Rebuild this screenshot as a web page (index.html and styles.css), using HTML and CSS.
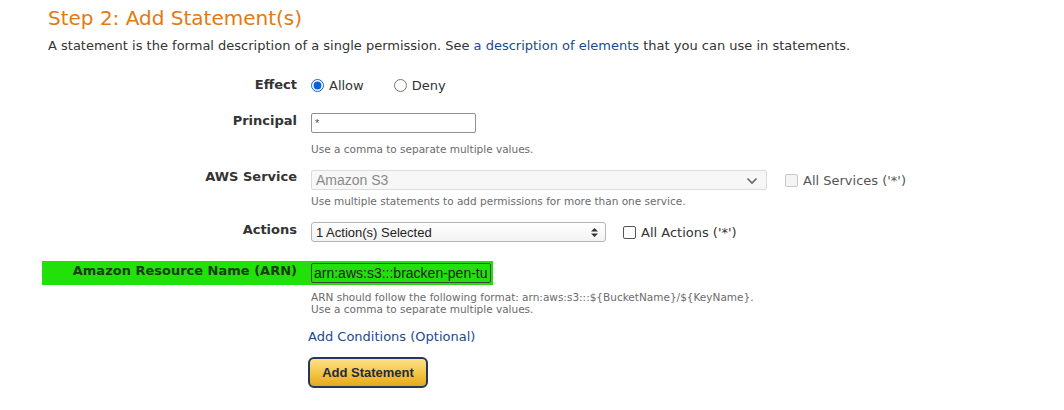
FILE: index.html
```html
<!DOCTYPE html>
<html lang="en">
<head>
<meta charset="utf-8">
<title>Step 2: Add Statement(s)</title>
<link rel="stylesheet" href="styles.css">
</head>
<body>
<div class="page">
  <h1 class="title">Step 2: Add Statement(s)</h1>
  <p class="intro">A statement is the formal description of a single permission. See <a class="link" href="#">a description of elements</a> that you can use in statements.</p>

  <div class="row row-effect">
    <div class="label">Effect</div>
    <div class="control radios">
      <label class="radio-opt"><input type="radio" name="effect" checked class="radio"><span>Allow</span></label>
      <label class="radio-opt deny"><input type="radio" name="effect" class="radio"><span>Deny</span></label>
    </div>
  </div>

  <div class="row row-principal">
    <div class="label">Principal</div>
    <div class="control">
      <input class="text-input principal" type="text" value="*">
      <div class="hint hint-1">Use a comma to separate multiple values.</div>
    </div>
  </div>

  <div class="row row-service">
    <div class="label">AWS Service</div>
    <div class="control">
      <div class="inline">
        <div class="select select-service">
          <span class="select-text">Amazon S3</span>
          <svg class="chev" width="12" height="8" viewBox="0 0 12 8"><path d="M1.5 1.5 L6 6 L10.5 1.5" fill="none" stroke="#666" stroke-width="1.6"/></svg>
        </div>
        <label class="check-opt disabled"><span class="box box-disabled"></span><span>All Services ('*')</span></label>
      </div>
      <div class="hint hint-2">Use multiple statements to add permissions for more than one service.</div>
    </div>
  </div>

  <div class="row row-actions">
    <div class="label">Actions</div>
    <div class="control">
      <div class="inline">
        <div class="select select-actions">
          <span class="select-text">1 Action(s) Selected</span>
          <svg class="updown" width="7" height="9" viewBox="0 0 7 9"><path d="M3.5 0 L7 3.5 L0 3.5 Z M3.5 9 L7 5.5 L0 5.5 Z" fill="#333"/></svg>
        </div>
        <label class="check-opt"><span class="box"></span><span>All Actions ('*')</span></label>
      </div>
    </div>
  </div>

  <div class="row row-arn">
    <div class="label">Amazon Resource Name (ARN)</div>
    <div class="control">
      <input class="text-input arn" type="text" value="arn:aws:s3:::bracken-pen-tu">
    </div>
  </div>
  <div class="arn-hints hint">
    ARN should follow the following format: arn:aws:s3:::${BucketName}/${KeyName}.<br>
    Use a comma to separate multiple values.
  </div>

  <div class="actions-block">
    <a class="link cond" href="#">Add Conditions (Optional)</a>
    <button class="btn" type="button">Add Statement</button>
  </div>
</div>
</body>
</html>
```

FILE: styles.css
```css
html, body {
  margin: 0;
  padding: 0;
  background: #ffffff;
}
body {
  font-family: "DejaVu Sans", Verdana, sans-serif;
  color: #333333;
  font-size: 13px;
}
.page {
  padding-left: 48px;
}
.title {
  margin: 6px 0 0;
  font-size: 20px;
  line-height: 24px;
  font-weight: normal;
  color: #e47911;
}
.intro {
  margin: 8px 0 0;
  font-size: 13px;
  line-height: 16px;
  color: #333333;
}
.link {
  color: #1a4a8f;
  text-decoration: none;
}
.row {
  display: grid;
  grid-template-columns: 249px auto;
  column-gap: 14px;
  align-items: start;
}
.label {
  text-align: right;
  font-weight: bold;
  font-size: 13px;
  line-height: 16px;
  color: #333333;
}
.row-effect { margin-top: 22px; }
.row-effect .label { line-height: 18px; }
.radios {
  display: flex;
  align-items: center;
  height: 18px;
}
.radio-opt {
  display: flex;
  align-items: center;
  gap: 5px;
  color: #333;
}
.radio-opt.deny { margin-left: 30px; }
.radio {
  margin: 0;
  width: 13px;
  height: 13px;
  accent-color: #0a64d8;
}
.row-principal { margin-top: 19px; }
.text-input {
  box-sizing: border-box;
  height: 20px;
  border: 1px solid #8f8f8f;
  border-radius: 2px;
  padding: 0 3px;
  font-family: "Liberation Sans", Arial, sans-serif;
  font-size: 13px;
  color: #333;
  display: block;
}
.principal {
  width: 165px;
  font-size: 11px;
  color: #555;
}
.hint {
  font-size: 10.5px;
  line-height: 12px;
  color: #6b6b6b;
}
.hint-1 { margin-top: 10px; }
.row-service { margin-top: 15px; }
.row-service .label { margin-top: -1px; }
.inline {
  display: flex;
  align-items: center;
}
.select {
  position: relative;
  box-sizing: border-box;
  height: 20px;
  border-radius: 2px;
  display: flex;
  align-items: center;
  padding-left: 4px;
}
.select-service {
  width: 456px;
  border: 1px solid #dcdcdc;
  background: #f7f7f7;
}
.select-service .select-text {
  font-family: "Liberation Sans", Arial, sans-serif;
  font-size: 14px;
  color: #8a8a8a;
}
.chev {
  position: absolute;
  right: 8px;
  top: 6px;
}
.select-actions {
  width: 295px;
  border: 1px solid #b5b5b5;
  background: linear-gradient(#ffffff, #f3f3f3);
  border-radius: 3px;
}
.select-actions .select-text {
  font-family: "Liberation Sans", Arial, sans-serif;
  font-size: 13px;
  color: #222;
}
.updown {
  position: absolute;
  right: 7px;
  top: 5px;
}
.check-opt {
  display: flex;
  align-items: center;
  gap: 5px;
  font-size: 13px;
  color: #333;
}
.row-service .check-opt { margin-left: 18px; }
.row-actions .check-opt { margin-left: 17px; }
.check-opt.disabled { color: #555; }
.box {
  box-sizing: border-box;
  width: 13px;
  height: 13px;
  border: 1px solid #555;
  border-radius: 2px;
  background: #fff;
}
.box-disabled {
  border-color: #c8c8c8;
  background: #f4f4f4;
}
.hint-2 { margin-top: 5px; }
.row-actions { margin-top: 15px; }
.row-actions .label { margin-top: 0; }
.row-arn {
  margin-top: 19px;
  margin-left: -6px;
  padding: 2px 2px 2px 6px;
  width: fit-content;
  background: #22e00a;
}
.row-arn .label {
  margin-top: 0;
  color: #1b3a14;
}
.arn {
  width: 180px;
  background: transparent;
  border-color: #444;
  color: #222;
  font-size: 14px;
  padding: 0 2px;
  overflow: hidden;
}
.arn-hints {
  margin-top: 6px;
  padding-left: 263px;
}
.actions-block {
  padding-left: 260px;
  display: flex;
  flex-direction: column;
  align-items: flex-start;
}
.cond {
  margin-top: 14px;
  font-size: 13px;
  line-height: 16px;
}
.btn {
  margin-top: 12px;
  width: 120px;
  height: 31px;
  border: 2px solid #23375a;
  border-radius: 6px;
  background: linear-gradient(#fde189, #f2c13c 60%, #e5a820);
  font-family: "Liberation Sans", Arial, sans-serif;
  font-weight: bold;
  font-size: 13px;
  color: #1f2a44;
  padding: 0;
}
```
